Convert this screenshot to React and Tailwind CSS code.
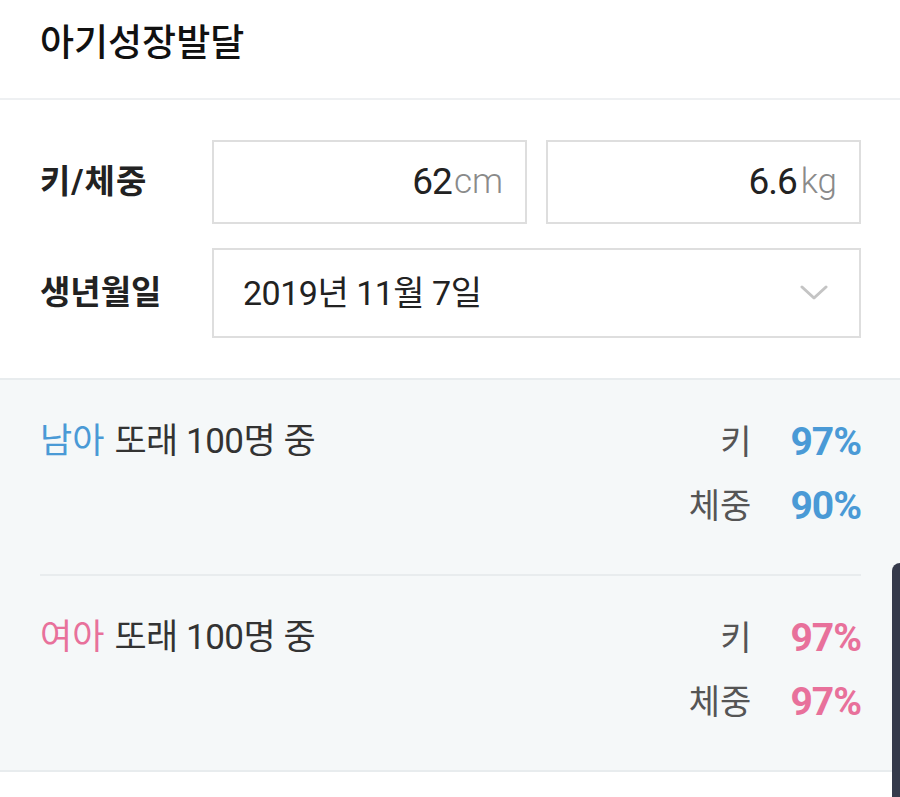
import React from 'react';

const FONT = { fontFamily: 'Roboto, "Noto Sans CJK KR", sans-serif' };

const StatRow = ({ label, value, color }) => (
  <div className="flex h-16 items-center justify-end">
    <span className="text-[34px] text-[#555]">{label}</span>
    <span className={`ml-[39px] text-right text-[39px] font-bold tracking-[-1px] ${color}`}>{value}</span>
  </div>
);

const PercentBlock = ({ sex, sexColor, height, weight, valueColor, last }) => (
  <div className={`flex justify-between pt-[30px] pb-[36px] ${last ? '' : 'border-b-2 border-[#e8ecee]'}`}>
    <div className="flex h-16 items-center text-[35px] text-[#333]">
      <span className={sexColor}>{sex}</span>
      <span className="ml-[10px] tracking-[-0.5px]">또래 100명 중</span>
    </div>
    <div className="flex flex-col">
      <StatRow label="키" value={height} color={valueColor} />
      <StatRow label="체중" value={weight} color={valueColor} />
    </div>
  </div>
);

export default function App() {
  return (
    <div className="relative h-[797px] w-[900px] overflow-hidden bg-white" style={FONT}>
      {/* Header */}
      <div className="flex h-[100px] items-center border-b-2 border-[#eef0f2] pl-10 pr-[39px]">
        <h1 className="-mt-[10px] text-[37px] font-medium text-[#111]">아기성장발달</h1>
      </div>

      {/* Inputs */}
      <div className="flex flex-col gap-6 pl-10 pr-[39px] pt-[40px] pb-[40px]">
        <div className="flex items-center">
          <div className="w-[172px] text-[33px] font-bold tracking-[1px] text-[#222]">키/체중</div>
          <div className="flex flex-1 gap-[19px]">
            <div className="flex h-[84px] flex-1 items-center justify-end border-2 border-[#dedede] pr-[22px]">
              <span className="text-[37px] tracking-[-1px] text-[#222]">62</span>
              <span className="ml-[2px] text-[35px] font-light text-[#8a8a8a]">cm</span>
            </div>
            <div className="flex h-[84px] flex-1 items-center justify-end border-2 border-[#dedede] pr-[22px]">
              <span className="text-[37px] tracking-[-1px] text-[#222]">6.6</span>
              <span className="ml-[4px] text-[35px] font-light text-[#8a8a8a]">kg</span>
            </div>
          </div>
        </div>
        <div className="flex items-center">
          <div className="w-[172px] text-[33px] font-bold text-[#222]">생년월일</div>
          <div className="flex h-[90px] flex-1 items-center justify-between border-2 border-[#dedede] pl-[29px] pr-[31px]">
            <span className="text-[34px] tracking-[-0.5px] text-[#222]">2019년 11월 7일</span>
            <svg width="28" height="16" viewBox="0 0 28 16" fill="none">
              <path d="M2 2l12 11 12-11" stroke="#c4c4c4" strokeWidth="3" strokeLinecap="round" strokeLinejoin="round" />
            </svg>
          </div>
        </div>
      </div>

      {/* Percentiles */}
      <div className="border-y-2 border-[#e8ecee] bg-[#f5f8f9] pl-10 pr-[39px]">
        <PercentBlock sex="남아" sexColor="text-[#4a9ad6]" height="97%" weight="90%" valueColor="text-[#4a9ad6]" />
        <PercentBlock sex="여아" sexColor="text-[#e8719b]" height="97%" weight="97%" valueColor="text-[#e8719b]" last />
      </div>

      {/* floating edge panel */}
      <div className="absolute top-[563px] right-0 h-[240px] w-[8px] rounded-tl-[10px] bg-[#353a4b]" />
    </div>
  );
}
